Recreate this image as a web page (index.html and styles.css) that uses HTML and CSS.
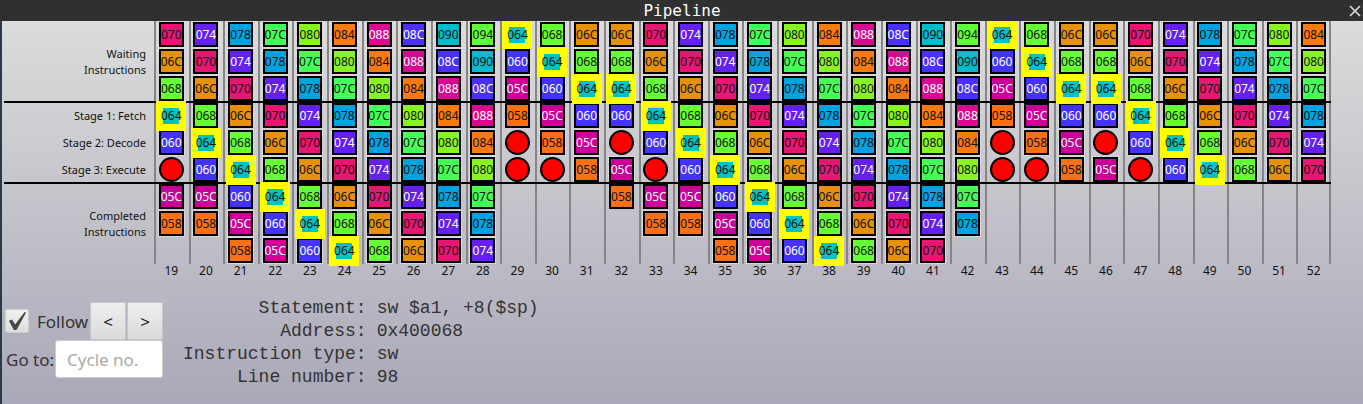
FILE: index.html
```html
<!DOCTYPE html>
<html lang="en">
<head>
<meta charset="utf-8">
<title>Pipeline</title>
<link rel="stylesheet" href="styles.css">
</head>
<body>
<div class="window">
  <header class="titlebar">
    <h1 class="title">Pipeline</h1>
    <button class="close" type="button" aria-label="Close">
      <svg width="14" height="14" viewBox="0 0 14 14"><path d="M2 2l10 10M12 2L2 12" stroke="#d8d8d8" stroke-width="1.7" fill="none"/></svg>
    </button>
  </header>
  <main class="content">
    <table class="pipeline">
      <tbody id="stages"></tbody>
    </table>
    <section class="bottom">
      <form class="controls">
        <div class="control-row">
          <input class="check" type="checkbox" id="follow" checked>
          <label class="follow-label" for="follow">Follow</label>
          <button class="step" type="button">&lt;</button>
          <button class="step" type="button">&gt;</button>
        </div>
        <div class="control-row">
          <label for="cycle">Go to:</label>
          <input class="cycle" type="text" id="cycle" placeholder="Cycle no.">
        </div>
      </form>
      <dl class="details">
        <dt>Statement:</dt><dd>sw $a1, +8($sp)</dd>
        <dt>Address:</dt><dd>0x400068</dd>
        <dt>Instruction type:</dt><dd>sw</dd>
        <dt>Line number:</dt><dd>98</dd>
      </dl>
    </section>
  </main>
</div>
<script src="pipeline.js"></script>
</body>
</html>
```
FILE: styles.css
```css
* {
  box-sizing: border-box;
}

body {
  margin: 0;
  font-family: "Noto Sans", "Open Sans", sans-serif;
  color: #111;
}

.window {
  display: flex;
  flex-direction: column;
  min-height: 100vh;
  background: #303030;
}

.titlebar {
  display: grid;
  grid-template-columns: 20px 1fr 20px;
  align-items: center;
  height: 21px;
  padding-left: 1px;
}

.title {
  grid-column: 2;
  margin: 0;
  font: 16px/20px "DejaVu Sans Mono", monospace;
  color: #fff;
  text-align: center;
}

.close {
  display: flex;
  justify-content: flex-end;
  padding: 0 1px 0 0;
  border: 0;
  background: none;
}

.content {
  flex: 1;
  border-left: 2px solid #2b3a4a;
  padding-left: 2px;
  background: linear-gradient(#dcdcdc, #aaa8b8);
}

.pipeline {
  display: grid;
  grid-template-columns: 150px repeat(34, 1fr);
  grid-template-rows: repeat(9, 27px) 14px;
  margin-right: 32px;
  font-size: 12px;
  line-height: 16px;
}

.pipeline tbody,
.pipeline tr {
  display: contents;
}

.group {
  display: flex;
  align-items: center;
  justify-content: flex-end;
  padding: 0 8px 0 0;
  font-size: 11px;
  font-weight: normal;
  text-align: right;
  white-space: pre-line;
}

.group-tall {
  grid-row: span 3;
}

.slot {
  display: flex;
  align-items: center;
  justify-content: center;
  padding: 0;
  background: linear-gradient(#858585, #858585) left / 2px 100% no-repeat;
}

.slot:last-child {
  background: linear-gradient(#858585, #858585) left / 2px 100% no-repeat,
    linear-gradient(#858585, #858585) right / 2px 100% no-repeat;
}

.divided > * {
  box-shadow: 0 -1px 0 #000, inset 0 1px 0 #000;
}

.divided .instr {
  box-shadow: none;
}

.instr,
.bubble {
  flex: none;
  width: 25px;
  height: 25px;
  border: 2px solid #000;
}

.instr {
  display: flex;
  align-items: center;
  justify-content: center;
  font-size: 12px;
  line-height: 14px;
  outline: 1px solid #d8d8da;
}

.divided .instr {
  outline: 0;
}

.bubble {
  border-radius: 50%;
  background: #f00;
}

.light {
  color: #fff;
}

.selected {
  z-index: 1;
  width: 30px;
  height: 30px;
  border: 7px solid #ff0;
  outline: 0;
}

.first .selected {
  align-self: flex-start;
  height: 28px;
  border-top-width: 6px;
  border-bottom-width: 6px;
}

.i058 { background: #f97015; }
.i05C { background: #cc0099; }
.i060 { background: #4433ff; }
.i064 { background: #00c2c2; }
.i068 { background: #66ff33; }
.i06C { background: #e69109; }
.i070 { background: #e61773; }
.i074 { background: #6420f0; }
.i078 { background: #00a3e0; }
.i07C { background: #44ff55; }
.i080 { background: #88f522; }
.i084 { background: #f97a0f; }
.i088 { background: #d80a90; }
.i08C { background: #4a30ff; }
.i090 { background: #00bbcc; }
.i094 { background: #5eff3a; }

.corner,
.number {
  padding: 0;
  font-weight: normal;
  line-height: 14px;
  text-align: center;
}

.bottom {
  display: flex;
  gap: 20px;
  padding: 19px 0 16px 1px;
  color: #333;
}

.controls {
  width: 158px;
  padding-top: 5px;
  font-size: 17px;
}

.control-row {
  display: flex;
  align-items: center;
  gap: 1px;
  height: 38px;
}

.control-row label {
  flex: none;
  padding-left: 1px;
}

.control-row .follow-label {
  flex: 1;
  padding-left: 7px;
}

.check {
  appearance: none;
  flex: none;
  width: 24px;
  height: 24px;
  margin: 0;
  border: 1px solid #d0d0d4;
  border-radius: 2px;
  background: linear-gradient(#f2f2f2, #dcdcdc);
  box-shadow: 0 1px 0 #aaa;
}

.check:checked::before {
  content: "";
  display: block;
  width: 17px;
  height: 18px;
  margin: 2px 3px;
  background: #484848;
  clip-path: polygon(0 48%, 18% 42%, 36% 70%, 92% 0, 100% 4%, 44% 100%, 28% 100%);
}

.step {
  flex: none;
  width: 36px;
  height: 38px;
  padding: 0;
  border: 1px solid #c8c8cc;
  border-radius: 2px;
  background: linear-gradient(#efefef, #dadada);
  font: 17px "Noto Sans", sans-serif;
  color: #222;
}

.cycle {
  flex: 1;
  min-width: 0;
  height: 38px;
  padding: 0 11px;
  border: 1px solid #ccc;
  border-radius: 3px;
  background: #fff;
  font: 17px "Noto Sans", sans-serif;
}

.cycle::placeholder {
  color: #aaa;
}

.details {
  display: grid;
  grid-template-columns: auto auto;
  column-gap: 10px;
  margin: 0;
  font: 18px/23px "Liberation Mono", monospace;
}

.details dt {
  text-align: right;
}

.details dd {
  margin: 0;
}
```
FILE: pipeline.js
```js
// One string per cycle: three waiting, three stages, three completed.
// "O" is a bubble, "-" an empty slot.
const firstCycle = 19;
const cycles = [
  "070 06C 068 064 060 O 05C 058 -",
  "074 070 06C 068 064 060 05C 058 -",
  "078 074 070 06C 068 064 060 05C 058",
  "07C 078 074 070 06C 068 064 060 05C",
  "080 07C 078 074 070 06C 068 064 060",
  "084 080 07C 078 074 070 06C 068 064",
  "088 084 080 07C 078 074 070 06C 068",
  "08C 088 084 080 07C 078 074 070 06C",
  "090 08C 088 084 080 07C 078 074 070",
  "094 090 08C 088 084 080 07C 078 074",
  "064 060 05C 058 O O - - -",
  "068 064 060 05C 058 O - - -",
  "06C 068 064 060 05C 058 - - -",
  "06C 068 064 060 O 05C 058 - -",
  "070 06C 068 064 060 O 05C 058 -",
  "074 070 06C 068 064 060 05C 058 -",
  "078 074 070 06C 068 064 060 05C 058",
  "07C 078 074 070 06C 068 064 060 05C",
  "080 07C 078 074 070 06C 068 064 060",
  "084 080 07C 078 074 070 06C 068 064",
  "088 084 080 07C 078 074 070 06C 068",
  "08C 088 084 080 07C 078 074 070 06C",
  "090 08C 088 084 080 07C 078 074 070",
  "094 090 08C 088 084 080 07C 078 -",
  "064 060 05C 058 O O - - -",
  "068 064 060 05C 058 O - - -",
  "06C 068 064 060 05C 058 - - -",
  "06C 068 064 060 O 05C - - -",
  "070 06C 068 064 060 O - - -",
  "074 070 06C 068 064 060 - - -",
  "078 074 070 06C 068 064 - - -",
  "07C 078 074 070 06C 068 - - -",
  "080 07C 078 074 070 06C - - -",
  "084 080 07C 078 074 070 - - -"
].map(c => c.split(" "));

const groups = {
  0: ["Waiting\nInstructions", 3],
  3: ["Stage 1: Fetch", 1],
  4: ["Stage 2: Decode", 1],
  5: ["Stage 3: Execute", 1],
  6: ["Completed\nInstructions", 3]
};
const light = ["05C", "060", "074", "088", "08C"];

function slot(value) {
  if (value === "-") return '<td class="slot"></td>';
  if (value === "O") return '<td class="slot"><div class="bubble"></div></td>';
  const extra = (light.includes(value) ? " light" : "") + (value === "064" ? " selected" : "");
  return `<td class="slot"><div class="instr i${value}${extra}">${value}</div></td>`;
}

let html = "";
for (let row = 0; row < 9; row++) {
  const cls = row === 0 ? "first" : row === 3 || row === 6 ? "divided" : "";
  html += `<tr class="${cls}">`;
  if (groups[row]) {
    const [text, span] = groups[row];
    html += `<th scope="row" rowspan="${span}" class="group${span > 1 ? " group-tall" : ""}">${text}</th>`;
  }
  html += cycles.map(c => slot(c[row])).join("") + "</tr>";
}
html += '<tr><td class="corner"></td>' +
  cycles.map((c, i) => `<td class="number">${firstCycle + i}</td>`).join("") + "</tr>";
document.getElementById("stages").innerHTML = html;
```
